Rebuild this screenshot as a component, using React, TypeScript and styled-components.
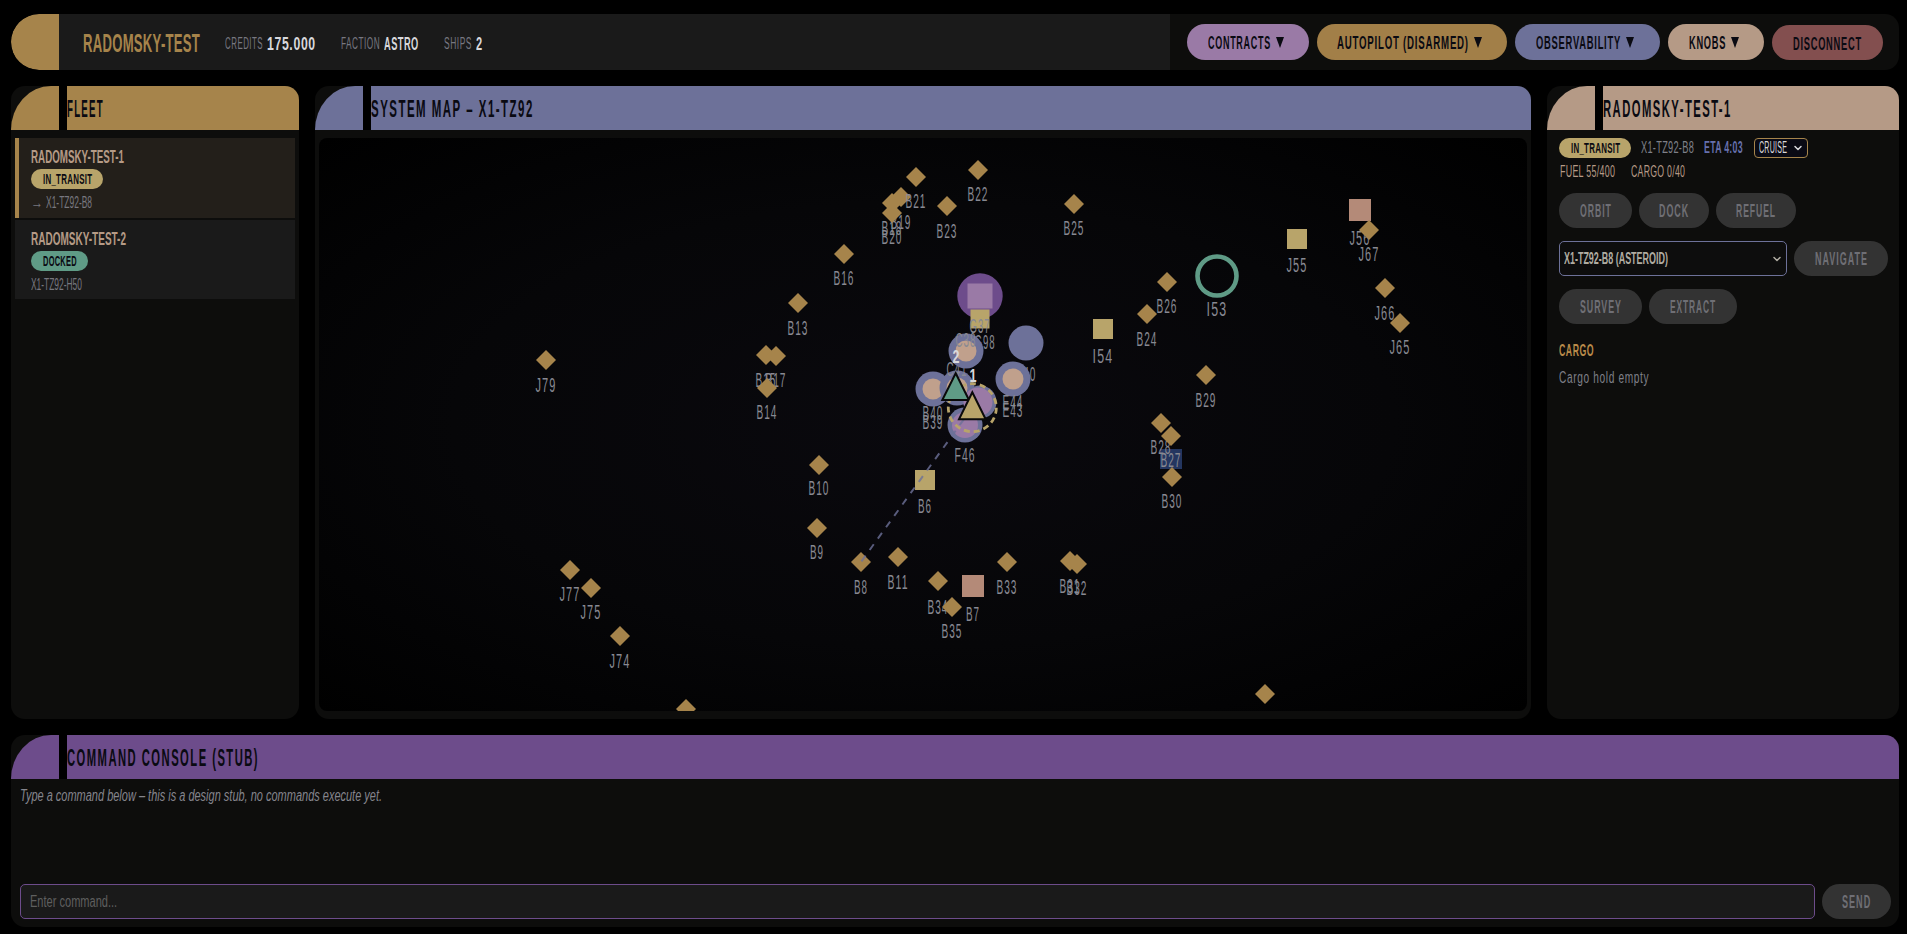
import React, { useLayoutEffect, useRef, useState } from 'react';
import styled, { createGlobalStyle } from 'styled-components';
import { ChevronDown } from 'lucide-react';

const GOLD = '#a6844b';
const LAVENDER = '#6d7199';
const TAN = '#b59a86';
const PURPLE = '#6d4c8b';
const LILAC = '#9a7aa6';
const YELLOW = '#b8a46a';
const GREEN = '#5f9b86';
const SALMON = '#b48a78';
const INK = '#0a0a12';

const GlobalStyle = createGlobalStyle`
  html, body {
    margin: 0;
    background: #000;
    height: 100%;
    overflow: hidden;
  }
  body, input {
    font-family: "Liberation Sans Narrow", "Liberation Sans", sans-serif;
  }
`;

// the original face is far narrower than anything installed, so squeeze to a known width
function Fit({ w, children }: { w: number; children: React.ReactNode }) {
  const ref = useRef<HTMLSpanElement>(null);
  const [scale, setScale] = useState(1);
  useLayoutEffect(() => {
    if (ref.current) setScale(w / ref.current.offsetWidth);
  }, [w]);
  return (
    <FitBox $w={w}>
      <FitInner ref={ref} style={{ transform: `scaleX(${scale})` }}>
        {children}
      </FitInner>
    </FitBox>
  );
}

const FitBox = styled.span<{ $w: number }>`
  display: inline-block;
  width: ${(p) => p.$w}px;
  flex: none;
  white-space: nowrap;
`;

const FitInner = styled.span`
  display: inline-block;
  transform-origin: 0 50%;
`;

const Page = styled.div`
  box-sizing: border-box;
  width: 1907px;
  height: 934px;
  padding: 14px 8px 7px 11px;
  display: grid;
  grid-template-columns: 288px 1fr 352px;
  grid-template-rows: 56px 633px 192px;
  column-gap: 16px;
  row-gap: 16px;
`;

const TopBar = styled.header`
  grid-column: 1 / -1;
  display: flex;
  background: #0d0d0c;
  border-radius: 28px 14px 14px 28px;
  overflow: hidden;
`;

const TopCap = styled.div`
  width: 48px;
  flex: none;
  background: ${GOLD};
  border-radius: 28px 0 0 28px;
`;

const TopInfo = styled.div`
  width: 1111px;
  flex: none;
  background: #1a1a1a;
  display: flex;
  align-items: center;
  padding: 3px 0 0 24px;
  box-sizing: border-box;
`;

const Brand = styled.span`
  font-size: 25px;
  font-weight: bold;
  color: ${GOLD};
  margin-right: 25px;
  line-height: 1;
  letter-spacing: 0.5px;
`;

const Stat = styled.span`
  display: inline-flex;
  align-items: center;
  gap: 4px;
  margin-right: 25px;
  font-size: 16px;
  color: #777780;
  letter-spacing: 1px;
`;

const StatValue = styled.span`
  font-size: 19px;
  font-weight: bold;
  color: #d8d8dc;
`;

const TopActions = styled.div`
  flex: 1;
  display: flex;
  align-items: center;
  gap: 8px;
  padding-left: 17px;
`;

const PillButton = styled.button<{ $bg: string; $w: number; $low?: boolean }>`
  width: ${(p) => p.$w}px;
  height: ${(p) => (p.$low ? 35 : 36)}px;
  margin-top: ${(p) => (p.$low ? 1 : 0)}px;
  flex: none;
  border: 0;
  padding: ${(p) => (p.$low ? '2px 0 0' : '1px 5px 0 0')};
  border-radius: 18px;
  background: ${(p) => p.$bg};
  color: ${INK};
  font: inherit;
  font-size: 19px;
  font-weight: bold;
  letter-spacing: 1.5px;
  display: flex;
  align-items: center;
  justify-content: center;
  gap: 5px;
`;

const Arrow = styled.span`
  width: 0;
  height: 0;
  border-left: 4.5px solid transparent;
  border-right: 4.5px solid transparent;
  border-top: 11px solid ${INK};
`;

const Panel = styled.section<{ $wide?: boolean }>`
  ${(p) => (p.$wide ? 'grid-column: 1 / -1;' : '')}
  display: flex;
  flex-direction: column;
  min-width: 0;
  background: #0d0d0c;
  border-radius: 14px;
  overflow: hidden;
`;

const PanelHead = styled.div`
  height: 44px;
  flex: none;
  display: flex;
  background: transparent;
`;

const HeadCap = styled.div<{ $c: string }>`
  width: 48px;
  flex: none;
  background: ${(p) => p.$c};
  border-top-left-radius: 40px 44px;
`;

const HeadGap = styled.div`
  width: 8px;
  flex: none;
  background: #000;
`;

const HeadBar = styled.div<{ $c: string }>`
  flex: 1;
  background: ${(p) => p.$c};
  display: flex;
  align-items: center;
  font-size: 23px;
  font-weight: bold;
  letter-spacing: 3px;
  color: ${INK};
  padding-top: 3px;
  box-sizing: border-box;
`;

const FleetList = styled.div`
  display: flex;
  flex-direction: column;
  gap: 2px;
  padding: 8px 4px 0;
`;

const FleetCard = styled.div<{ $active?: boolean }>`
  background: ${(p) => (p.$active ? '#231f1a' : '#1a1a1a')};
  border-left: 4px solid ${(p) => (p.$active ? GOLD : '#1a1a1a')};
  height: ${(p) => (p.$active ? 80 : 79)}px;
  box-sizing: border-box;
  padding: 9px 0 0 12px;
  display: flex;
  flex-direction: column;
  align-items: flex-start;
  gap: 2px;
`;

const ShipName = styled.div`
  font-size: 18px;
  line-height: 20px;
  color: ${TAN};
  font-weight: bold;
`;

const StatusPill = styled.span<{ $bg: string; $w: number }>`
  width: ${(p) => p.$w}px;
  height: 20px;
  flex: none;
  border-radius: 10px;
  background: ${(p) => p.$bg};
  color: ${INK};
  font-size: 14px;
  font-weight: bold;
  letter-spacing: 0.5px;
  display: inline-flex;
  align-items: center;
  justify-content: center;
`;

const ShipRoute = styled.div`
  margin-top: 3px;
  font-size: 16px;
  line-height: 17px;
  color: #77777f;
  display: flex;
  align-items: center;
  gap: 3px;
`;

const MapWell = styled.div`
  flex: 1;
  margin: 8px 4px;
  border-radius: 8px;
  overflow: hidden;
  background: radial-gradient(ellipse at 50% 50%, #0a090e 0%, #060608 55%, #000 100%);
`;

const MapSvg = styled.svg`
  display: block;
  width: 100%;
  height: 100%;
`;

const MapLabel = styled.text`
  font-family: "Liberation Sans Narrow", "Liberation Sans", sans-serif;
  font-size: 20px;
  letter-spacing: 2px;
  fill: #888992;
  text-anchor: middle;
`;

const MapBadge = styled.text`
  font-family: "Liberation Sans Narrow", "Liberation Sans", sans-serif;
  font-size: 18px;
  font-weight: bold;
  fill: #d8d8dc;
  text-anchor: middle;
`;

const Details = styled.div`
  padding: 8px 12px;
  display: flex;
  flex-direction: column;
  align-items: flex-start;
`;

const DetailRow = styled.div<{ $mt?: number }>`
  display: flex;
  align-items: center;
  height: 20px;
  margin-top: ${(p) => p.$mt ?? 0}px;
  font-size: 16px;
  letter-spacing: 0.5px;
`;

const Muted = styled.span<{ $ml: number; $c: string; $strong?: boolean }>`
  margin-left: ${(p) => p.$ml}px;
  color: ${(p) => p.$c};
  font-weight: ${(p) => (p.$strong ? 'bold' : 'normal')};
  display: inline-flex;
`;

const FlightMode = styled.div`
  margin-left: 11px;
  box-sizing: border-box;
  width: 54px;
  height: 20px;
  border: 1px solid ${GOLD};
  border-radius: 4px;
  background: #0a0a14;
  color: #d8d8dc;
  display: flex;
  align-items: center;
  padding-left: 4px;
  gap: 5px;
`;

const ButtonRow = styled.div<{ $mt: number }>`
  display: flex;
  gap: 7px;
  margin-top: ${(p) => p.$mt}px;
`;

const GhostButton = styled.button<{ $w: number }>`
  width: ${(p) => p.$w}px;
  height: 35px;
  flex: none;
  border: 0;
  padding: 1px 0 0;
  border-radius: 18px;
  background: #333333;
  color: #6f6f75;
  font: inherit;
  font-size: 18.5px;
  font-weight: bold;
  letter-spacing: 2px;
  display: flex;
  align-items: center;
  justify-content: center;
`;

const WaypointSelect = styled.div`
  box-sizing: border-box;
  width: 228px;
  height: 35px;
  border: 1px solid ${LAVENDER};
  border-radius: 5px;
  background: #0d0d0d;
  color: #b0aca2;
  font-size: 16px;
  font-weight: bold;
  display: flex;
  align-items: center;
  justify-content: space-between;
  padding: 0 3px 0 4px;
`;

const SectionTitle = styled.h4`
  margin: 17px 0 0;
  font-size: 17px;
  line-height: 20px;
  font-weight: bold;
  letter-spacing: 1px;
  color: #b98a4a;
`;

const SmallNote = styled.p`
  margin: 8px 0 0;
  font-size: 16px;
  line-height: 18px;
  letter-spacing: 1px;
  color: #7f8089;
`;

const ConsoleBody = styled.div`
  flex: 1;
  display: flex;
  flex-direction: column;
  padding: 8px 8px 8px 9px;
`;

const ConsoleHint = styled.p`
  flex: 1;
  margin: 0;
  font-size: 16px;
  line-height: 18px;
  font-style: italic;
  color: #85858c;
`;

const ConsoleRow = styled.div`
  display: flex;
  gap: 7px;
`;

const InputWrap = styled.div`
  flex: 1;
  position: relative;
`;

const CommandInput = styled.input`
  box-sizing: border-box;
  display: block;
  width: 100%;
  height: 35px;
  border: 1px solid ${PURPLE};
  border-radius: 5px;
  background: #1a1a1a;
  outline: none;
`;

const Placeholder = styled.span`
  position: absolute;
  left: 10px;
  top: 9px;
  font-size: 16px;
  line-height: 18px;
  color: #5f5f5f;
  pointer-events: none;
`;

type Kind = 'diamond' | 'square' | 'salmon';
type Waypoint = { id: string; x: number; y: number; ly?: number; kind?: Kind };

const waypoints: Waypoint[] = [
  { id: 'J79', x: 546, y: 360, ly: 392 },
  { id: 'B15', x: 766, y: 355, ly: 387 },
  { id: 'B17', x: 776, y: 356, ly: 387 },
  { id: 'B14', x: 767, y: 388, ly: 419 },
  { id: 'B13', x: 798, y: 303, ly: 335 },
  { id: 'B16', x: 844, y: 254, ly: 285 },
  { id: 'B18', x: 892, y: 203, ly: 235 },
  { id: 'B19', x: 901, y: 197, ly: 229 },
  { id: 'B20', x: 892, y: 213, ly: 244 },
  { id: 'B21', x: 916, y: 177, ly: 208 },
  { id: 'B22', x: 978, y: 170, ly: 201 },
  { id: 'B23', x: 947, y: 206, ly: 238 },
  { id: 'B25', x: 1074, y: 204, ly: 235 },
  { id: 'B26', x: 1167, y: 282, ly: 313 },
  { id: 'B24', x: 1147, y: 314, ly: 346 },
  { id: 'B29', x: 1206, y: 375, ly: 407 },
  { id: 'B28', x: 1161, y: 423, ly: 454 },
  { id: 'B27', x: 1171, y: 436, ly: 467 },
  { id: 'B30', x: 1172, y: 477, ly: 508 },
  { id: 'B10', x: 819, y: 465, ly: 495 },
  { id: 'B9', x: 817, y: 528, ly: 559 },
  { id: 'B8', x: 861, y: 562, ly: 594 },
  { id: 'B11', x: 898, y: 557, ly: 589 },
  { id: 'B34', x: 938, y: 581, ly: 614 },
  { id: 'B33', x: 1007, y: 562, ly: 594 },
  { id: 'B31', x: 1070, y: 561, ly: 593 },
  { id: 'B32', x: 1077, y: 564, ly: 595 },
  { id: 'J77', x: 570, y: 570, ly: 601 },
  { id: 'J75', x: 591, y: 588, ly: 619 },
  { id: 'J74', x: 620, y: 636, ly: 668 },
  { id: 'B36', x: 686, y: 709, ly: 740 },
  { id: 'J70', x: 1265, y: 694, ly: 725 },
  { id: 'I54', x: 1103, y: 329, ly: 363, kind: 'square' },
  { id: 'J55', x: 1297, y: 239, ly: 272, kind: 'square' },
  { id: 'B6', x: 925, y: 480, ly: 513, kind: 'square' },
  { id: 'B7', x: 973, y: 586, ly: 621, kind: 'salmon' },
  { id: 'B35', x: 952, y: 607, ly: 638 },
  { id: 'J56', x: 1360, y: 210, ly: 245, kind: 'salmon' },
  { id: 'J67', x: 1369, y: 230, ly: 261 },
  { id: 'J66', x: 1385, y: 288, ly: 320 },
  { id: 'J65', x: 1400, y: 323, ly: 354 },
];

const moons = [
  { id: 'B40', x: 933, y: 389, ly: 420 },
  { id: 'C41', x: 957, y: 388, ly: 376 },
  { id: 'C38', x: 966, y: 351, ly: 347 },
];

function MapNode({ w }: { w: Waypoint }) {
  const size = w.kind === 'salmon' ? 22 : 20;
  return (
    <g>
      {w.kind ? (
        <rect
          x={w.x - size / 2}
          y={w.y - size / 2}
          width={size}
          height={size}
          fill={w.kind === 'salmon' ? SALMON : YELLOW}
        />
      ) : (
        <polygon points={`${w.x},${w.y - 10} ${w.x + 10},${w.y} ${w.x},${w.y + 10} ${w.x - 10},${w.y}`} fill={GOLD} />
      )}
      <MapLabel x={w.x} y={w.ly} textLength={w.id.length === 2 ? 14 : 21} lengthAdjust="spacingAndGlyphs">
        {w.id}
      </MapLabel>
    </g>
  );
}

function Label({ id, x, y }: { id: string; x: number; y: number }) {
  return (
    <MapLabel x={x} y={y} textLength={21} lengthAdjust="spacingAndGlyphs">
      {id}
    </MapLabel>
  );
}

function SystemMap() {
  return (
    <MapSvg viewBox="319 138 1208 573">
      <rect x={1160} y={449} width={22} height={20} fill="#243660" />
      {waypoints.map((w) => (
        <MapNode key={w.id} w={w} />
      ))}

      <circle cx={1217} cy={276} r={19.5} fill="none" stroke={GREEN} strokeWidth={4.6} />
      <Label id="I53" x={1217} y={316} />

      <circle cx={980} cy={296} r={22.7} fill={PURPLE} />
      <rect x={967.5} y={283.5} width={25} height={25} fill={LILAC} />
      <rect x={970.5} y={309.5} width={19} height={19} fill={YELLOW} />
      <Label id="G37" x={980} y={333} />
      <Label id="G98" x={985} y={349} />

      <circle cx={1026} cy={343} r={17.5} fill={LAVENDER} />
      <Label id="E40" x={1026} y={381} />
      <circle cx={1013} cy={379} r={17.5} fill={LAVENDER} />
      <circle cx={1013} cy={379} r={10.5} fill="#c0a08c" />
      <Label id="E44" x={1013} y={409} />
      <Label id="E43" x={1013} y={417} />

      {moons.map((m) => (
        <g key={m.id}>
          <circle cx={m.x} cy={m.y} r={17.5} fill={LAVENDER} />
          <circle cx={m.x} cy={m.y} r={10.5} fill="#c0a08c" />
          <Label id={m.id} x={m.x} y={m.ly} />
        </g>
      ))}
      <Label id="B39" x={933} y={429} />

      <circle cx={980} cy={402} r={16.5} fill={LAVENDER} />
      <circle cx={978} cy={402} r={14.5} fill={LILAC} />
      <circle cx={965} cy={425} r={17.5} fill={LAVENDER} />
      <circle cx={965} cy={425} r={13} fill={LILAC} />
      <Label id="F46" x={965} y={462} />

      <line x1={972} y1={408} x2={861} y2={562} stroke={LAVENDER} strokeWidth={2} strokeDasharray="7 7" opacity={0.8} />
      <circle cx={972.3} cy={407.7} r={24} fill="none" stroke={YELLOW} strokeWidth={2.8} strokeDasharray="6 4" />
      <polygon points="955.7,373.3 969,400 942.3,400" fill={GREEN} stroke="#0a0a0a" strokeWidth={2} />
      <MapBadge x={956} y={363} textLength={7} lengthAdjust="spacingAndGlyphs">2</MapBadge>
      <polygon points="972.3,392.3 985.7,419.3 959,419.3" fill={YELLOW} stroke="#0a0a0a" strokeWidth={2} />
      <MapBadge x={973} y={382} textLength={7} lengthAdjust="spacingAndGlyphs">1</MapBadge>
    </MapSvg>
  );
}

export default function App() {
  return (
    <Page>
      <GlobalStyle />
      <TopBar>
        <TopCap />
        <TopInfo>
          <Brand>
            <Fit w={117}>RADOMSKY-TEST</Fit>
          </Brand>
          <Stat>
            <Fit w={38}>CREDITS</Fit>
            <StatValue>
              <Fit w={49}>175.000</Fit>
            </StatValue>
          </Stat>
          <Stat>
            <Fit w={39}>FACTION</Fit>
            <StatValue>
              <Fit w={35}>ASTRO</Fit>
            </StatValue>
          </Stat>
          <Stat>
            <Fit w={28}>SHIPS</Fit>
            <StatValue>
              <Fit w={7}>2</Fit>
            </StatValue>
          </Stat>
        </TopInfo>
        <TopActions>
          <PillButton $bg={LILAC} $w={122}>
            <Fit w={63}>CONTRACTS</Fit>
            <Arrow />
          </PillButton>
          <PillButton $bg="#a27f48" $w={190}>
            <Fit w={132}>AUTOPILOT (DISARMED)</Fit>
            <Arrow />
          </PillButton>
          <PillButton $bg={LAVENDER} $w={145}>
            <Fit w={85}>OBSERVABILITY</Fit>
            <Arrow />
          </PillButton>
          <PillButton $bg={TAN} $w={96}>
            <Fit w={37}>KNOBS</Fit>
            <Arrow />
          </PillButton>
          <PillButton $bg="#834f4f" $w={111} $low>
            <Fit w={69}>DISCONNECT</Fit>
          </PillButton>
        </TopActions>
      </TopBar>

      <Panel>
        <PanelHead>
          <HeadCap $c={GOLD} />
          <HeadGap />
          <HeadBar $c={GOLD}>
            <Fit w={37}>FLEET</Fit>
          </HeadBar>
        </PanelHead>
        <FleetList>
          <FleetCard $active>
            <ShipName>
              <Fit w={93}>RADOMSKY-TEST-1</Fit>
            </ShipName>
            <StatusPill $bg={YELLOW} $w={72}>
              <Fit w={49}>IN_TRANSIT</Fit>
            </StatusPill>
            <ShipRoute>
              <Fit w={12}>→</Fit>
              <Fit w={46}>X1-TZ92-B8</Fit>
            </ShipRoute>
          </FleetCard>
          <FleetCard>
            <ShipName>
              <Fit w={95}>RADOMSKY-TEST-2</Fit>
            </ShipName>
            <StatusPill $bg={GREEN} $w={57}>
              <Fit w={34}>DOCKED</Fit>
            </StatusPill>
            <ShipRoute>
              <Fit w={51}>X1-TZ92-H50</Fit>
            </ShipRoute>
          </FleetCard>
        </FleetList>
      </Panel>

      <Panel>
        <PanelHead>
          <HeadCap $c={LAVENDER} />
          <HeadGap />
          <HeadBar $c={LAVENDER}>
            <Fit w={163}>SYSTEM MAP – X1-TZ92</Fit>
          </HeadBar>
        </PanelHead>
        <MapWell>
          <SystemMap />
        </MapWell>
      </Panel>

      <Panel>
        <PanelHead>
          <HeadCap $c={TAN} />
          <HeadGap />
          <HeadBar $c={TAN}>
            <Fit w={129}>RADOMSKY-TEST-1</Fit>
          </HeadBar>
        </PanelHead>
        <Details>
          <DetailRow>
            <StatusPill $bg={YELLOW} $w={72}>
              <Fit w={49}>IN_TRANSIT</Fit>
            </StatusPill>
            <Muted $ml={10} $c="#7f8089">
              <Fit w={53}>X1-TZ92-B8</Fit>
            </Muted>
            <Muted $ml={10} $c="#6670ad" $strong>
              <Fit w={39}>ETA 4:03</Fit>
            </Muted>
            <FlightMode>
              <Fit w={28}>CRUISE</Fit>
              <ChevronDown size={12} strokeWidth={3} />
            </FlightMode>
          </DetailRow>
          <DetailRow $mt={4}>
            <Muted $ml={1} $c={TAN}>
              <Fit w={55}>FUEL 55/400</Fit>
            </Muted>
            <Muted $ml={16} $c={TAN}>
              <Fit w={54}>CARGO 0/40</Fit>
            </Muted>
          </DetailRow>
          <ButtonRow $mt={11}>
            <GhostButton $w={73}>
              <Fit w={32}>ORBIT</Fit>
            </GhostButton>
            <GhostButton $w={70}>
              <Fit w={30}>DOCK</Fit>
            </GhostButton>
            <GhostButton $w={80}>
              <Fit w={40}>REFUEL</Fit>
            </GhostButton>
          </ButtonRow>
          <ButtonRow $mt={13}>
            <WaypointSelect>
              <Fit w={104}>X1-TZ92-B8 (ASTEROID)</Fit>
              <ChevronDown size={12} strokeWidth={3} />
            </WaypointSelect>
            <GhostButton $w={94}>
              <Fit w={53}>NAVIGATE</Fit>
            </GhostButton>
          </ButtonRow>
          <ButtonRow $mt={13}>
            <GhostButton $w={83}>
              <Fit w={42}>SURVEY</Fit>
            </GhostButton>
            <GhostButton $w={88}>
              <Fit w={46}>EXTRACT</Fit>
            </GhostButton>
          </ButtonRow>
          <SectionTitle>
            <Fit w={35}>CARGO</Fit>
          </SectionTitle>
          <SmallNote>
            <Fit w={90}>Cargo hold empty</Fit>
          </SmallNote>
        </Details>
      </Panel>

      <Panel $wide>
        <PanelHead>
          <HeadCap $c={PURPLE} />
          <HeadGap />
          <HeadBar $c={PURPLE}>
            <Fit w={192}>COMMAND CONSOLE (STUB)</Fit>
          </HeadBar>
        </PanelHead>
        <ConsoleBody>
          <ConsoleHint>
            <Fit w={362}>Type a command below – this is a design stub, no commands execute yet.</Fit>
          </ConsoleHint>
          <ConsoleRow>
            <InputWrap>
              <CommandInput aria-label="Enter command" />
              <Placeholder>
                <Fit w={87}>Enter command...</Fit>
              </Placeholder>
            </InputWrap>
            <GhostButton $w={69}>
              <Fit w={29}>SEND</Fit>
            </GhostButton>
          </ConsoleRow>
        </ConsoleBody>
      </Panel>
    </Page>
  );
}
